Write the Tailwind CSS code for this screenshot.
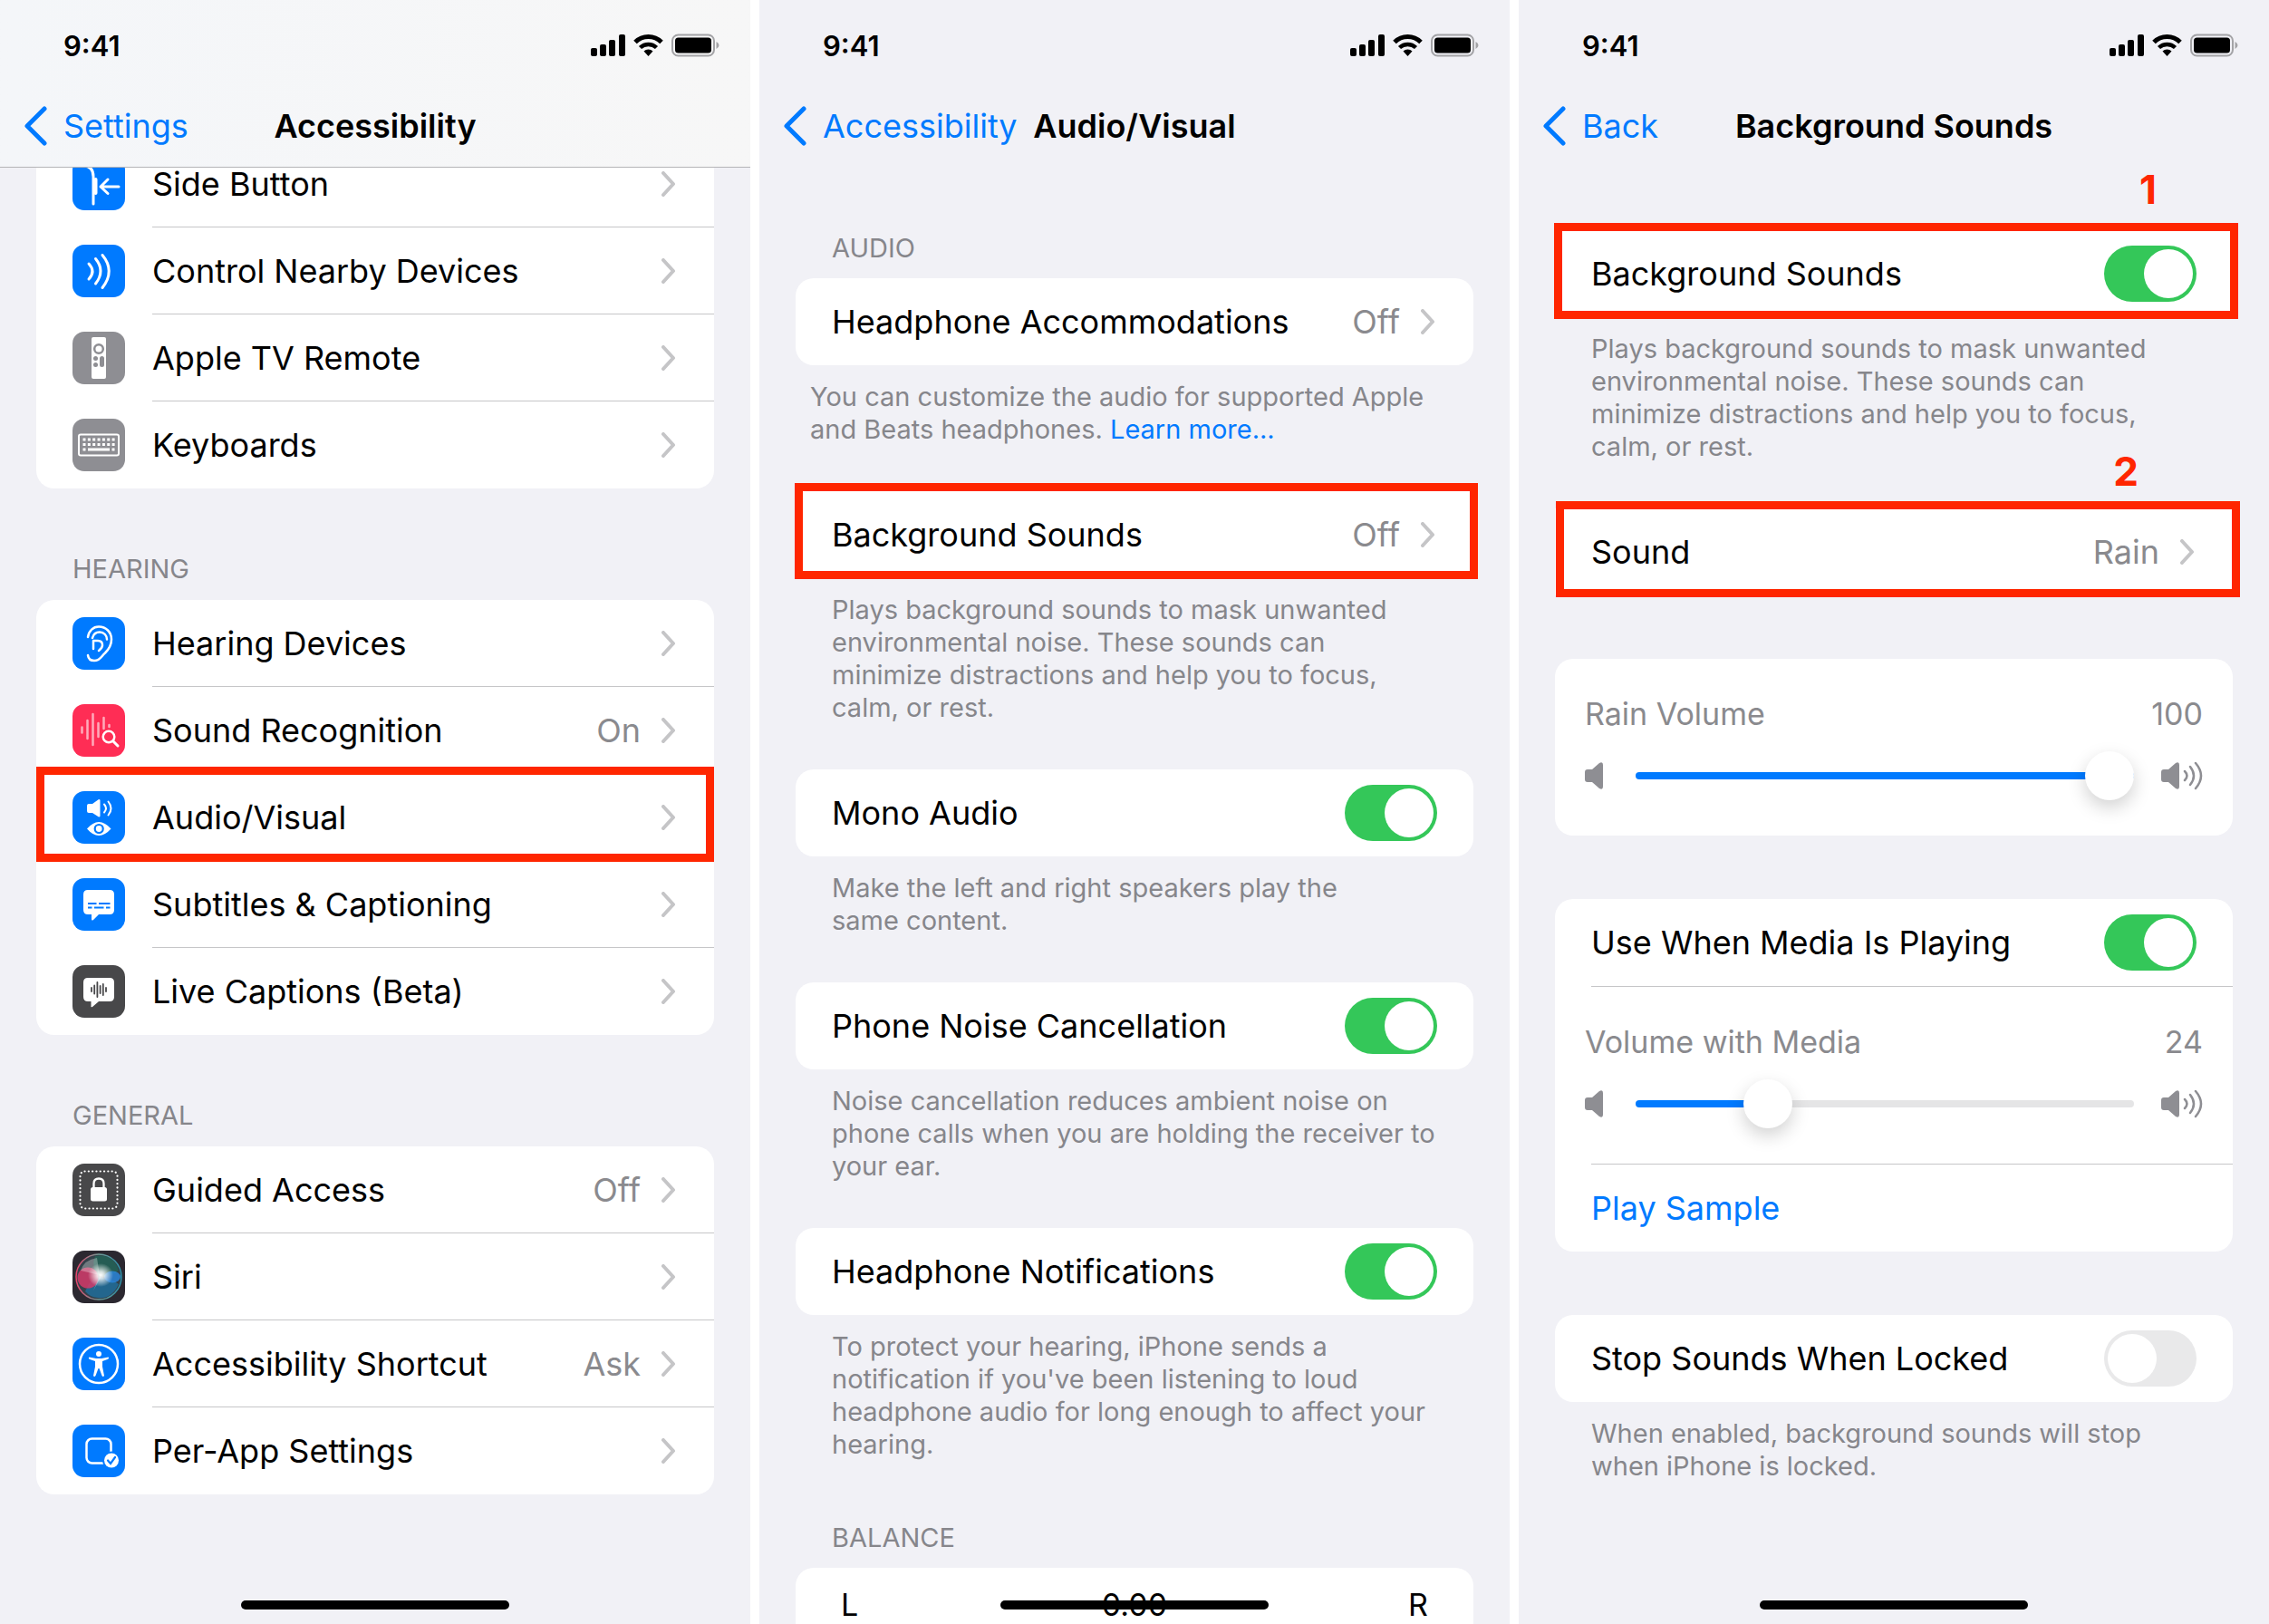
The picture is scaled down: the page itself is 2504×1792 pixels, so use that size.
<!DOCTYPE html>
<html lang="en">
<head>
    <meta charset="UTF-8">
    <meta name="viewport" content="width=device-width, initial-scale=1.0">
    <title>iPhone Background Sounds</title>
    <script src="https://cdn.jsdelivr.net/npm/@tailwindcss/browser@4"></script>
</head>
<body class="bg-white text-black font-['Inter','Liberation_Sans',sans-serif] text-[36px] leading-[48px]">
    <!-- Shared icons -->
    <svg class="hidden">
        <symbol id="chevron" viewBox="0 0 16 28"><path d="M2 2 13 14 2 26" fill="none" stroke="#c5c5c7" stroke-width="4" stroke-linecap="round" stroke-linejoin="round"/></symbol>
        <symbol id="back" viewBox="0 0 26 44"><path d="M23 3 4 22l19 19" fill="none" stroke="#007aff" stroke-width="5" stroke-linecap="round" stroke-linejoin="round"/></symbol>
        <symbol id="status" viewBox="0 0 142 28">
            <rect x="0" y="16" width="7" height="9" rx="2"/>
            <rect x="10" y="12" width="7" height="13" rx="2"/>
            <rect x="20" y="7" width="7" height="18" rx="2"/>
            <rect x="31" y="1" width="7" height="24" rx="2"/>
            <path d="M49 9.500a20.500 20.500 0 0 1 29 0" fill="none" stroke="#000" stroke-width="5"/>
            <path d="M54.500 15.500a13 13 0 0 1 18 0" fill="none" stroke="#000" stroke-width="4.500"/>
            <path d="M58.500 19.500a7.500 7.500 0 0 1 10 0l-5 5.500z"/>
            <rect x="90" y="1.500" width="46" height="23" rx="6.500" fill="none" stroke="#a3a3a6" stroke-width="2"/>
            <rect x="93" y="4.500" width="40" height="17" rx="3.500"/>
            <path d="M138.500 9q3 1.500 3 4t-3 4z" fill="#a3a3a6"/>
        </symbol>
        <symbol id="speaker-low" viewBox="0 0 20 30"><path d="M0 11q0-3 3-3h5L16 1q4-2 4 2v24q0 4-4 2l-8-7H3q-3 0-3-3z" fill="#8e8e93"/></symbol>
        <symbol id="speaker-high" viewBox="0 0 46 32">
            <path d="M0 12q0-3 3-3h5l8-7q4-2 4 2v24q0 4-4 2l-8-7H3q-3 0-3-3z" fill="#8e8e93"/>
            <path d="M26 11q5 5 0 10M32 6q8 10 0 20M38 2q12 14 0 28" fill="none" stroke="#8e8e93" stroke-width="2.500" stroke-linecap="round"/>
        </symbol>
    </svg>

    <div class="grid grid-cols-3 gap-[10px]">

        <!-- Accessibility -->
        <section class="relative h-screen overflow-hidden bg-[#f1f1f6]">
            <header class="relative z-10 h-[185px] border-b border-[#b4b4b7] bg-linear-to-r from-[#f4f6f9] to-[#f7f7f7]">
                <div class="flex h-[101px] items-center justify-between pl-[70px] pr-[34px]">
                    <span class="text-[31px] font-semibold">9:41</span>
                    <svg class="h-7 w-[142px]"><use href="#status"/></svg>
                </div>
                <nav class="grid h-[75px] grid-cols-[1fr_auto_1fr] items-center px-[26px]">
                    <a href="#" class="flex items-center gap-[18px] text-[#007aff]"><svg class="h-11 w-[26px]"><use href="#back"/></svg>Settings</a>
                    <h1 class="font-semibold">Accessibility</h1>
                </nav>
            </header>
            <main class="px-10">
                <div class="-mt-[30px] overflow-hidden rounded-[20px] bg-white">
                    <a href="#" class="flex h-24 items-center gap-[30px] pl-10">
                        <svg class="size-[58px] rounded-[13px] bg-[#007aff]" viewBox="0 0 58 58" fill="none" stroke="#fff" stroke-width="3" stroke-linecap="round" stroke-linejoin="round"><path d="M8 9h4q11 0 11 12v30"/><path d="M25.500 24v15" stroke-width="4"/><path d="M51 32H31M39 24l-8 8 8 7.500"/></svg>
                        <span class="flex h-full flex-1 items-center gap-[23px] border-b border-[#c6c6c8] pr-[42px]"><span class="flex-1">Side Button</span><svg class="h-7 w-4"><use href="#chevron"/></svg></span>
                    </a>
                    <a href="#" class="flex h-24 items-center gap-[30px] pl-10">
                        <svg class="size-[58px] rounded-[13px] bg-[#007aff]" viewBox="0 0 58 58" fill="none" stroke="#fff" stroke-width="3" stroke-linecap="round"><path d="M18 21q8 8.500 0 17M25.500 15.500q11 13.500 0 27.500M33 11.500q14.500 17.500 0 36"/></svg>
                        <span class="flex h-full flex-1 items-center gap-[23px] border-b border-[#c6c6c8] pr-[42px]"><span class="flex-1">Control Nearby Devices</span><svg class="h-7 w-4"><use href="#chevron"/></svg></span>
                    </a>
                    <a href="#" class="flex h-24 items-center gap-[30px] pl-10">
                        <svg class="size-[58px] rounded-[13px] bg-[#8e8e93]" viewBox="0 0 58 58"><rect x="21" y="6" width="16" height="46" rx="2" fill="#fff"/><circle cx="29" cy="19" r="4.800" fill="none" stroke="#8e8e93" stroke-width="2.500"/><g fill="#8e8e93"><circle cx="25.500" cy="29.500" r="2.500"/><circle cx="25.500" cy="36.500" r="2.500"/><rect x="30" y="27" width="5" height="12" rx="2.500"/></g></svg>
                        <span class="flex h-full flex-1 items-center gap-[23px] border-b border-[#c6c6c8] pr-[42px]"><span class="flex-1">Apple TV Remote</span><svg class="h-7 w-4"><use href="#chevron"/></svg></span>
                    </a>
                    <a href="#" class="flex h-24 items-center gap-[30px] pl-10">
                        <svg class="size-[58px] rounded-[13px] bg-[#8e8e93]" viewBox="0 0 58 58" fill="none" stroke="#fff"><rect x="7" y="17.500" width="44" height="23" rx="2" stroke-width="2"/><path d="M11.500 23H47M11.500 28.500H47" stroke-width="3" stroke-dasharray="3 2.350"/><path d="M11.500 34h3M17 34h24M43.500 34h3" stroke-width="3"/></svg>
                        <span class="flex h-full flex-1 items-center gap-[23px] pr-[42px]"><span class="flex-1">Keyboards</span><svg class="h-7 w-4"><use href="#chevron"/></svg></span>
                    </a>
                </div>

                <h2 class="px-10 pt-[71px] pb-4 text-[29px] leading-9 text-[#86868b]">HEARING</h2>
                <div class="rounded-[20px] bg-white">
                    <a href="#" class="flex h-24 items-center gap-[30px] pl-10">
                        <svg class="size-[58px] rounded-[13px] bg-[#007aff]" viewBox="0 0 58 58" fill="none" stroke="#fff" stroke-width="2.500" stroke-linecap="round" stroke-linejoin="round"><path d="M17 22c1-7 6-11.500 12-11.500 8 0 14 6 14 14 0 7-3 11-7 15-4 3-5 8.500-12 8.500-4 0-6.500-2-7-6"/><path d="M22 23c1-4 4-6.500 8-6.500 5 0 8 4 8 8"/><path d="M23 35v-9h5q5 0 5 5 0 3-4 6"/></svg>
                        <span class="flex h-full flex-1 items-center gap-[23px] border-b border-[#c6c6c8] pr-[42px]"><span class="flex-1">Hearing Devices</span><svg class="h-7 w-4"><use href="#chevron"/></svg></span>
                    </a>
                    <a href="#" class="flex h-24 items-center gap-[30px] pl-10">
                        <svg class="size-[58px] rounded-[13px] bg-[#ff2d55]" viewBox="0 0 58 58" fill="none" stroke="#fff" stroke-linecap="round"><path d="M10.500 25.500v6M16.500 18v20M22.500 11v34M28.500 21v15M34.500 15v12M40.500 23v2" stroke="#ffabbb" stroke-width="2.500"/><circle cx="40" cy="36" r="6.300" stroke-width="2.500" fill="#ff2d55"/><path d="m45 41 5 5" stroke-width="3"/></svg>
                        <span class="flex h-full flex-1 items-center gap-[23px] border-b border-[#c6c6c8] pr-[42px]"><span class="flex-1">Sound Recognition</span><span class="text-[#8a8a8e]">On</span><svg class="h-7 w-4"><use href="#chevron"/></svg></span>
                    </a>
                    <a href="#" class="relative flex h-24 items-center gap-[30px] pl-10">
                        <span class="absolute -top-2 left-0 h-[105px] w-full border-[9px] border-[#ff2600]"></span>
                        <svg class="size-[58px] rounded-[13px] bg-[#007aff]" viewBox="0 0 58 58" fill="none"><path d="M16 16q0-2 2-2h4l7-5q1.500 0 1.500 1v17.500q0 1-1.500 1L22 24h-4q-2 0-2-2z" fill="#fff"/><path d="M35 14.500q4 4.500 0 9M39.500 11.500q6 7.500 0 15" stroke="#fff" stroke-width="2" stroke-linecap="round"/><path d="M16 41.500q13-15 26.500 0-13.500 15-26.500 0z" fill="#fff"/><circle cx="29.200" cy="41.500" r="4.500" stroke="#007aff" stroke-width="2.200"/></svg>
                        <span class="flex h-full flex-1 items-center gap-[23px] border-b border-[#c6c6c8] pr-[42px]"><span class="flex-1">Audio/Visual</span><svg class="h-7 w-4"><use href="#chevron"/></svg></span>
                    </a>
                    <a href="#" class="flex h-24 items-center gap-[30px] pl-10">
                        <svg class="size-[58px] rounded-[13px] bg-[#007aff]" viewBox="0 0 58 58"><path d="M17 13h24q5 0 5 5v17q0 5-5 5H29l-6 6q-2 1.500-2-1v-5h-4q-5 0-5-5V18q0-5 5-5z" fill="#fff"/><path d="M17 28h9.500M29 28h12.500M17 32.500h4.500M24 32.500h10.500M37 32.500h4.500" stroke="#007aff" stroke-width="2"/></svg>
                        <span class="flex h-full flex-1 items-center gap-[23px] border-b border-[#c6c6c8] pr-[42px]"><span class="flex-1">Subtitles &amp; Captioning</span><svg class="h-7 w-4"><use href="#chevron"/></svg></span>
                    </a>
                    <a href="#" class="flex h-24 items-center gap-[30px] pl-10">
                        <svg class="size-[58px] rounded-[13px] bg-[#48484a]" viewBox="0 0 58 58"><path d="M17 14h24q5 0 5 5v16q0 5-5 5H29l-7 6q-2 1-1.500-1v-5H17q-5 0-5-5V19q0-5 5-5z" fill="#fff"/><path d="M21 25v4M24.200 22.500v9M27.400 19v16M30.600 23v8M33.800 21v12M37 25v4" stroke="#48484a" stroke-width="1.800" stroke-linecap="round"/></svg>
                        <span class="flex h-full flex-1 items-center gap-[23px] pr-[42px]"><span class="flex-1">Live Captions (Beta)</span><svg class="h-7 w-4"><use href="#chevron"/></svg></span>
                    </a>
                </div>

                <h2 class="px-10 pt-[71px] pb-4 text-[29px] leading-9 text-[#86868b]">GENERAL</h2>
                <div class="rounded-[20px] bg-white">
                    <a href="#" class="flex h-24 items-center gap-[30px] pl-10">
                        <svg class="size-[58px] rounded-[13px] bg-[#48484a]" viewBox="0 0 58 58" fill="none"><rect x="8.500" y="8.500" width="41" height="41" rx="5" stroke="#fff" stroke-width="2.200" stroke-linecap="round" stroke-dasharray="0.100 4.200"/><rect x="20" y="26" width="18" height="15.500" rx="2.500" fill="#fff"/><path d="M23.500 27v-5q0-5.500 5.500-5.500t5.500 5.500v5" stroke="#fff" stroke-width="2.300"/></svg>
                        <span class="flex h-full flex-1 items-center gap-[23px] border-b border-[#c6c6c8] pr-[42px]"><span class="flex-1">Guided Access</span><span class="text-[#8a8a8e]">Off</span><svg class="h-7 w-4"><use href="#chevron"/></svg></span>
                    </a>
                    <a href="#" class="flex h-24 items-center gap-[30px] pl-10">
                        <svg class="size-[58px] rounded-[13px] bg-[#2b2830]" viewBox="0 0 58 58">
                            <defs>
                                <radialGradient id="siriCore"><stop offset="0" stop-color="#fff"/><stop offset=".3" stop-color="#fff" stop-opacity=".8"/><stop offset="1" stop-color="#fff" stop-opacity="0"/></radialGradient>
                                <linearGradient id="siriRim" x1="0" x2="1"><stop offset="0" stop-color="#e8466d"/><stop offset=".5" stop-color="#6f9a94"/><stop offset="1" stop-color="#2b8fa8"/></linearGradient>
                            </defs>
                            <circle cx="29" cy="29" r="25" fill="#34414a" stroke="url(#siriRim)" stroke-width="1.500"/>
                            <path d="M25 6q20-3 26 16-9 8-22 6Q20 18 25 6z" fill="#1f6a58" opacity=".7"/>
                            <path d="M14 45q6-15 15-16 15 2 22 8-8 17-23 15-8 0-14-7z" fill="#1f6f9e" opacity=".8"/>
                            <circle cx="17" cy="30" r="11.500" fill="#d33a68" opacity=".85"/>
                            <ellipse cx="44" cy="29" rx="9" ry="6.500" fill="#2a84d8" opacity=".85"/>
                            <ellipse cx="31" cy="27" rx="14" ry="13" fill="url(#siriCore)"/>
                            <path d="M9 22q4-12 18-14l3 19zM30 28l9 17-8-15-8 14z" fill="#fff" opacity=".3"/>
                        </svg>
                        <span class="flex h-full flex-1 items-center gap-[23px] border-b border-[#c6c6c8] pr-[42px]"><span class="flex-1">Siri</span><svg class="h-7 w-4"><use href="#chevron"/></svg></span>
                    </a>
                    <a href="#" class="flex h-24 items-center gap-[30px] pl-10">
                        <svg class="size-[58px] rounded-[13px] bg-[#007aff]" viewBox="0 0 58 58" fill="#fff"><circle cx="29" cy="29" r="21" fill="none" stroke="#fff" stroke-width="2.500"/><circle cx="29" cy="18" r="3"/><path d="M18.500 21.500 26 23h6l7.500-1.500q1.500 1-.300 2.200L33 26v6l2 10q-1.200 2-2.500 0L29.500 34h-1l-3 8q-1.500 2-2.500 0l2-10v-6l-6.500-2.300q-1.500-1.200 0-2.200z"/></svg>
                        <span class="flex h-full flex-1 items-center gap-[23px] border-b border-[#c6c6c8] pr-[42px]"><span class="flex-1">Accessibility Shortcut</span><span class="text-[#8a8a8e]">Ask</span><svg class="h-7 w-4"><use href="#chevron"/></svg></span>
                    </a>
                    <a href="#" class="flex h-24 items-center gap-[30px] pl-10">
                        <svg class="size-[58px] rounded-[13px] bg-[#007aff]" viewBox="0 0 58 58" fill="none"><rect x="15.500" y="15.500" width="27" height="27" rx="6" stroke="#fff" stroke-width="2.500"/><circle cx="43" cy="39.500" r="10" fill="#007aff"/><circle cx="43" cy="39.500" r="8" fill="#fff"/><path d="m39 39.500 3 3.500 5-7" stroke="#007aff" stroke-width="2.200" stroke-linecap="round"/></svg>
                        <span class="flex h-full flex-1 items-center gap-[23px] pr-[42px]"><span class="flex-1">Per-App Settings</span><svg class="h-7 w-4"><use href="#chevron"/></svg></span>
                    </a>
                </div>
            </main>
            <div class="absolute inset-x-0 bottom-4 mx-auto h-[10px] w-[296px] rounded-full bg-black"></div>
        </section>

        <!-- Audio/Visual -->
        <section class="relative h-screen overflow-hidden bg-[#f1f1f6]">
            <header class="h-[185px]">
                <div class="flex h-[101px] items-center justify-between pl-[70px] pr-[34px]">
                    <span class="text-[31px] font-semibold">9:41</span>
                    <svg class="h-7 w-[142px]"><use href="#status"/></svg>
                </div>
                <nav class="grid h-[75px] grid-cols-[1fr_auto_1fr] items-center px-[26px]">
                    <a href="#" class="flex items-center gap-[18px] text-[#007aff]"><svg class="h-11 w-[26px]"><use href="#back"/></svg>Accessibility</a>
                    <h1 class="font-semibold">Audio/Visual</h1>
                </nav>
            </header>
            <main class="px-10">
                <h2 class="px-10 pt-[71px] pb-[15px] text-[29px] leading-9 text-[#86868b]">AUDIO</h2>
                <a href="#" class="flex h-24 items-center gap-[23px] rounded-[20px] bg-white pl-10 pr-[42px]">
                    <span class="flex-1">Headphone Accommodations</span><span class="text-[#8a8a8e]">Off</span><svg class="h-7 w-4"><use href="#chevron"/></svg>
                </a>
                <p class="px-4 pt-[17px] pb-[50px] text-[29px] leading-9 text-[#86868b]">You can customize the audio for supported Apple<br>and Beats headphones. <a href="#" class="text-[#007aff]">Learn more...</a></p>

                <a href="#" class="relative flex h-24 items-center gap-[23px] bg-white pl-10 pr-[42px]">
                    <span class="absolute -top-[9px] -left-px h-[106px] w-[754px] border-[9px] border-[#ff2600]"></span>
                    <span class="flex-1">Background Sounds</span><span class="text-[#8a8a8e]">Off</span><svg class="h-7 w-4"><use href="#chevron"/></svg>
                </a>
                <p class="px-10 pt-[17px] pb-[50px] text-[29px] leading-9 text-[#86868b]">Plays background sounds to mask unwanted<br>environmental noise. These sounds can<br>minimize distractions and help you to focus,<br>calm, or rest.</p>

                <label class="flex h-24 items-center justify-between rounded-[20px] bg-white px-10">Mono Audio
                    <input type="checkbox" checked class="flex h-[62px] w-[102px] appearance-none rounded-full bg-[#e9e9ea] p-1 before:size-[54px] before:rounded-full before:bg-white checked:justify-end checked:bg-[#34c759]">
                </label>
                <p class="px-10 pt-[17px] pb-[50px] text-[29px] leading-9 text-[#86868b]">Make the left and right speakers play the<br>same content.</p>

                <label class="flex h-24 items-center justify-between rounded-[20px] bg-white px-10">Phone Noise Cancellation
                    <input type="checkbox" checked class="flex h-[62px] w-[102px] appearance-none rounded-full bg-[#e9e9ea] p-1 before:size-[54px] before:rounded-full before:bg-white checked:justify-end checked:bg-[#34c759]">
                </label>
                <p class="px-10 pt-[17px] pb-[50px] text-[29px] leading-9 text-[#86868b]">Noise cancellation reduces ambient noise on<br>phone calls when you are holding the receiver to<br>your ear.</p>

                <label class="flex h-24 items-center justify-between rounded-[20px] bg-white px-10">Headphone Notifications
                    <input type="checkbox" checked class="flex h-[62px] w-[102px] appearance-none rounded-full bg-[#e9e9ea] p-1 before:size-[54px] before:rounded-full before:bg-white checked:justify-end checked:bg-[#34c759]">
                </label>
                <p class="px-10 pt-[17px] pb-[50px] text-[29px] leading-9 text-[#86868b]">To protect your hearing, iPhone sends a<br>notification if you've been listening to loud<br>headphone audio for long enough to affect your<br>hearing.</p>

                <h2 class="px-10 pt-[17px] pb-[15px] text-[29px] leading-9 text-[#86868b]">BALANCE</h2>
                <div class="grid h-48 grid-cols-3 rounded-[20px] bg-white px-[50px] pt-[17px] text-[34px]">
                    <span>L</span><span class="text-center">0.00</span><span class="text-right">R</span>
                </div>
            </main>
            <div class="absolute inset-x-0 bottom-4 mx-auto h-[10px] w-[296px] rounded-full bg-black"></div>
        </section>

        <!-- Background Sounds -->
        <section class="relative h-screen overflow-hidden bg-[#f1f1f6]">
            <header class="h-[185px]">
                <div class="flex h-[101px] items-center justify-between pl-[70px] pr-[34px]">
                    <span class="text-[31px] font-semibold">9:41</span>
                    <svg class="h-7 w-[142px]"><use href="#status"/></svg>
                </div>
                <nav class="grid h-[75px] grid-cols-[1fr_auto_1fr] items-center px-[26px]">
                    <a href="#" class="flex items-center gap-[18px] text-[#007aff]"><svg class="h-11 w-[26px]"><use href="#back"/></svg>Back</a>
                    <h1 class="font-semibold">Background Sounds</h1>
                </nav>
            </header>
            <main class="px-10 pt-[69px]">
                <label class="relative flex h-24 items-center justify-between bg-white px-10">Background Sounds
                    <span class="absolute -top-2 -left-px h-[106px] w-[755px] border-[9px] border-[#ff2600]"></span>
                    <span class="absolute -top-[69px] right-[84px] text-[44px] font-bold text-[#ff2600]">1</span>
                    <input type="checkbox" checked class="flex h-[62px] w-[102px] appearance-none rounded-full bg-[#e9e9ea] p-1 before:size-[54px] before:rounded-full before:bg-white checked:justify-end checked:bg-[#34c759]">
                </label>
                <p class="px-10 pt-[17px] pb-[50px] text-[29px] leading-9 text-[#86868b]">Plays background sounds to mask unwanted<br>environmental noise. These sounds can<br>minimize distractions and help you to focus,<br>calm, or rest.</p>

                <a href="#" class="relative flex h-24 items-center gap-[23px] bg-white pl-10 pr-[42px]">
                    <span class="absolute -top-2 left-px h-[106px] w-[755px] border-[9px] border-[#ff2600]"></span>
                    <span class="absolute -top-[65px] right-[104px] text-[44px] font-bold text-[#ff2600]">2</span>
                    <span class="flex-1">Sound</span><span class="text-[#8a8a8e]">Rain</span><svg class="h-7 w-4"><use href="#chevron"/></svg>
                </a>

                <div class="mt-[70px] h-[195px] rounded-[20px] bg-white px-[33px] pt-[37px] text-[34px] text-[#8a8a8e]">
                    <div class="flex justify-between"><label for="rainVolume">Rain Volume</label><output for="rainVolume">100</output></div>
                    <div class="mt-5 flex h-12 items-center">
                        <svg class="h-[30px] w-5"><use href="#speaker-low"/></svg>
                        <input id="rainVolume" type="range" min="0" max="100" value="100" style="background-size: 100% 100%" class="ml-9 mr-[30px] h-2 flex-1 appearance-none rounded-full bg-[#e5e5e6] bg-linear-to-r from-[#007aff] to-[#007aff] bg-no-repeat [&::-webkit-slider-thumb]:size-[54px] [&::-webkit-slider-thumb]:appearance-none [&::-webkit-slider-thumb]:rounded-full [&::-webkit-slider-thumb]:bg-white [&::-webkit-slider-thumb]:shadow-[0_8px_20px_rgba(0,0,0,0.18)]">
                        <svg class="h-8 w-[46px]"><use href="#speaker-high"/></svg>
                    </div>
                </div>

                <div class="mt-[70px] rounded-[20px] bg-white">
                    <label class="ml-10 flex h-[97px] items-center justify-between border-b border-[#c6c6c8] pr-10">Use When Media Is Playing
                        <input type="checkbox" checked class="flex h-[62px] w-[102px] appearance-none rounded-full bg-[#e9e9ea] p-1 before:size-[54px] before:rounded-full before:bg-white checked:justify-end checked:bg-[#34c759]">
                    </label>
                    <div class="h-[195px] px-[33px] pt-[37px] text-[34px] text-[#8a8a8e]">
                        <div class="flex justify-between"><label for="mediaVolume">Volume with Media</label><output for="mediaVolume">24</output></div>
                        <div class="mt-5 flex h-12 items-center">
                            <svg class="h-[30px] w-5"><use href="#speaker-low"/></svg>
                            <input id="mediaVolume" type="range" min="0" max="100" value="24" style="background-size: 24% 100%" class="ml-9 mr-[30px] h-2 flex-1 appearance-none rounded-full bg-[#e5e5e6] bg-linear-to-r from-[#007aff] to-[#007aff] bg-no-repeat [&::-webkit-slider-thumb]:size-[54px] [&::-webkit-slider-thumb]:appearance-none [&::-webkit-slider-thumb]:rounded-full [&::-webkit-slider-thumb]:bg-white [&::-webkit-slider-thumb]:shadow-[0_8px_20px_rgba(0,0,0,0.18)]">
                            <svg class="h-8 w-[46px]"><use href="#speaker-high"/></svg>
                        </div>
                    </div>
                    <div class="ml-10 flex h-[97px] items-center border-t border-[#c6c6c8]"><button type="button" class="text-[#007aff]">Play Sample</button></div>
                </div>

                <label class="mt-[70px] flex h-24 items-center justify-between rounded-[20px] bg-white px-10">Stop Sounds When Locked
                    <input type="checkbox" class="flex h-[62px] w-[102px] appearance-none rounded-full bg-[#e9e9ea] p-1 before:size-[54px] before:rounded-full before:bg-white checked:justify-end checked:bg-[#34c759]">
                </label>
                <p class="px-10 pt-[17px] text-[29px] leading-9 text-[#86868b]">When enabled, background sounds will stop<br>when iPhone is locked.</p>
            </main>
            <div class="absolute inset-x-0 bottom-4 mx-auto h-[10px] w-[296px] rounded-full bg-black"></div>
        </section>
    </div>

    <script>
        // Keep the blue part of each slider and its number in step with the thumb
        document.querySelectorAll('input[type="range"]').forEach((slider) => {
            slider.addEventListener('input', () => {
                slider.style.backgroundSize = slider.value + '% 100%';
                document.querySelector(`output[for="${slider.id}"]`).value = slider.value;
            });
        });
    </script>
</body>
</html>
